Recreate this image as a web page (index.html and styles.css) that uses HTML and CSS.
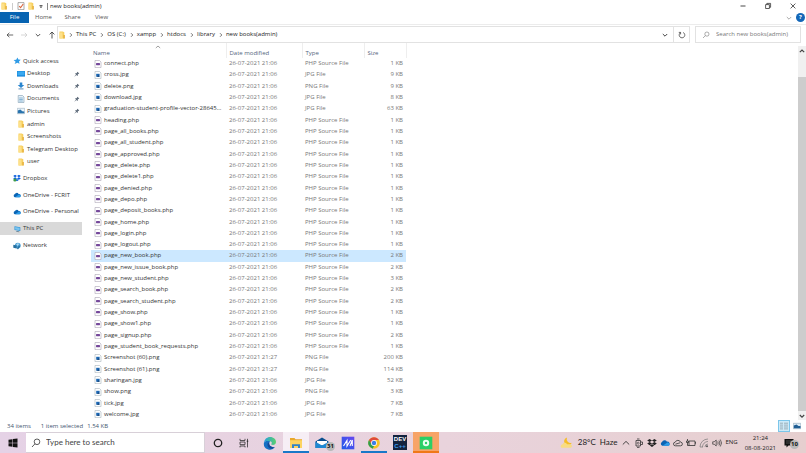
FILE: index.html
```html
<!DOCTYPE html>
<html lang="en">
<head>
<meta charset="utf-8">
<title>new books(admin)</title>
<link rel="stylesheet" href="styles.css">
</head>
<body>
<svg class="sprites" aria-hidden="true">
  <symbol id="folder" viewBox="0 0 8 8"><path fill="#f7cf5f" d="M1.5.5h3.2l1.6.8v6.2H1.5z"/><path fill="#fde08a" d="M1.5 1.5h3v6h-3z"/><path fill="#e5ad37" d="M5.4 4h1.4v3.5H5.4z"/></symbol>
  <symbol id="php" viewBox="0 0 8 8"><path fill="#fff" stroke="#a9a3b4" stroke-width=".6" d="M1 .5h4.5L7 2v5.6H1z"/><rect x="2" y="3" width="4" height="2.2" rx=".6" fill="#75489b"/></symbol>
  <symbol id="img" viewBox="0 0 8 8"><path fill="#fff" stroke="#a6b1ba" stroke-width=".6" d="M1 .5h4.5L7 2v5.6H1z"/><rect x="2.2" y="2.8" width="3.4" height="3" fill="#1c67b4"/><path fill="#123c6c" d="M3 5.8l1.4-1.5 1.2 1.5z"/></symbol>
  <symbol id="pin" viewBox="0 0 8 8"><path fill="#5f6c7b" d="M4.6 1l2.4 2.4-.6.5-.4-.1-1 1 .1 1.2-.6.6-1.4-1.4L1 7.2l-.3-.3 2-2.1-1.3-1.3.6-.6 1.2.1 1-1-.2-.4z"/></symbol>
  <symbol id="chev" viewBox="0 0 4 8"><path fill="none" stroke="#555" stroke-width=".8" d="M1 2.2L2.8 4 1 5.8"/></symbol>
  <symbol id="down" viewBox="0 0 8 8"><path fill="none" stroke="currentColor" stroke-width="1" d="M1.8 3L4 5.2 6.2 3"/></symbol>
  <symbol id="cloud" viewBox="0 0 10 8"><path fill="#0a64b4" d="M2.2 6.8A2 2 0 0 1 2 3.1 2.8 2.8 0 0 1 7 2.7a2.1 2.1 0 0 1 1 4.1z"/><path fill="#2a9be8" d="M2.8 6.8l4.4-3.3a2 2 0 0 1 2.4 1.7c0 1-.7 1.6-1.5 1.6z"/></symbol>
  <symbol id="dropbox" viewBox="0 0 10 9"><path d="M2.6.5L5 2 2.6 3.6.2 2zM7.4.5L9.8 2 7.4 3.6 5 2zM2.6 3.6L5 5.1 2.6 6.7.2 5.1zM7.4 3.6l2.4 1.5-2.4 1.6L5 5.1zM5 5.7l2.2 1.4L5 8.6 2.8 7.1z"/></symbol>
</svg>

<header class="titlebar">
  <div class="quick-tools">
    <svg class="ic8" viewBox="0 0 8 8"><use href="#folder"/></svg>
    <i class="sep"></i>
    <svg class="ic8" viewBox="0 0 8 8"><path fill="#fff" stroke="#888" stroke-width=".7" d="M1 .6h6v7H1z"/><path fill="none" stroke="#d9623b" stroke-width="1.1" d="M2.2 4.2l1.4 1.5L6.2 2"/></svg>
    <svg class="ic8" viewBox="0 0 8 8"><use href="#folder"/></svg>
    <svg class="ic8" viewBox="0 0 8 8"><path fill="#333" d="M2.5 3h3v.7h-3zM2.5 4.5h3L4 6z"/></svg>
    <i class="sep dark"></i>
  </div>
  <h1>new books(admin)</h1>
  <div class="window-buttons">
    <button aria-label="Minimize"><svg class="ic8" viewBox="0 0 8 8"><path stroke="#333" stroke-width=".9" d="M1.500 4h5"/></svg></button>
    <button aria-label="Restore"><svg class="ic8" viewBox="0 0 8 8"><path fill="none" stroke="#333" stroke-width=".8" d="M1.600 2.600h3.800v3.900H1.600zM2.800 2.600V1.400h3.800v3.900H5.400"/></svg></button>
    <button aria-label="Close"><svg class="ic8" viewBox="0 0 8 8"><path stroke="#333" stroke-width=".8" d="M1.600 1.600l4.800 4.800M6.400 1.600L1.600 6.400"/></svg></button>
  </div>
</header>

<nav class="ribbon">
  <button class="file">File</button><button>Home</button><button>Share</button><button>View</button>
  <div class="ribbon-end">
    <svg class="ic8 faint" viewBox="0 0 8 8"><use href="#down"/></svg>
    <button class="help" aria-label="Help">?</button>
  </div>
</nav>

<div class="address-row">
  <div class="history">
    <button aria-label="Back"><svg class="ic8" viewBox="0 0 8 8"><path fill="none" stroke="#444" stroke-width=".8" d="M7.200 4H1M3.400 1.800L1 4l2.400 2.200"/></svg></button>
    <button aria-label="Forward"><svg class="ic8" viewBox="0 0 8 8"><path fill="none" stroke="#ccc" stroke-width=".8" d="M1 4h6M4.800 1.800L7 4 4.800 6.200"/></svg></button>
    <button aria-label="Recent"><svg class="ic8" viewBox="0 0 8 8"><use href="#down"/></svg></button>
    <button aria-label="Up"><svg class="ic8" viewBox="0 0 8 8"><path fill="none" stroke="#444" stroke-width=".9" d="M4 7.500V1M1.600 3.400L4 1l2.400 2.400"/></svg></button>
  </div>
  <div class="address">
    <svg class="ic8" viewBox="0 0 8 8"><use href="#folder"/></svg>
    <svg class="chev"><use href="#chev"/></svg><a href="#">This PC</a>
    <svg class="chev"><use href="#chev"/></svg><a href="#">OS (C:)</a>
    <svg class="chev"><use href="#chev"/></svg><a href="#">xampp</a>
    <svg class="chev"><use href="#chev"/></svg><a href="#">htdocs</a>
    <svg class="chev"><use href="#chev"/></svg><a href="#">library</a>
    <svg class="chev"><use href="#chev"/></svg><a href="#">new books(admin)</a>
    <button class="drop" aria-label="Previous locations"><svg class="ic8" viewBox="0 0 8 8"><use href="#down"/></svg></button>
    <button class="refresh" aria-label="Refresh"><svg class="ic8" viewBox="0 0 8 8"><path fill="none" stroke="#444" stroke-width=".8" d="M5.200 1.500a2.800 2.800 0 1 1-2.600.1M2.600 3.400V1.400H.8"/></svg></button>
  </div>
  <label class="search">
    <svg class="ic8" viewBox="0 0 8 8"><circle cx="4.900" cy="3.100" r="2.100" fill="none" stroke="#777" stroke-width=".6"/><path stroke="#777" stroke-width=".6" d="M3.400 4.600L1 7"/></svg>
    <input type="text" placeholder="Search new books(admin)" aria-label="Search new books(admin)">
  </label>
</div>

<main class="panes">
  <nav class="tree">
    <ul class="quick">
      <li class="root"><svg class="ic8" viewBox="0 0 8 8"><path fill="#2f9be6" d="M4.400.6l1 2 2.300.2-1.700 1.600.5 2.300-2.100-1L1.600 7l1-2.300L.6 3l2.600-.3z"/></svg><a href="#">Quick access</a></li>
      <li><svg class="ic8" viewBox="0 0 8 8"><path fill="#1687d9" d="M0 1h8v5.600H0z"/><path fill="#39a9f0" d="M.5 1.500h7v3.800h-7z"/></svg><a href="#">Desktop</a><svg class="pin"><use href="#pin"/></svg></li>
      <li><svg class="ic8" viewBox="0 0 8 8"><path fill="#2b86cf" d="M2.700.5h2.600V3h2L4 6 .7 3h2z"/><path fill="#5a8bb5" d="M1.500 6.400h5v1h-5z"/></svg><a href="#">Downloads</a><svg class="pin"><use href="#pin"/></svg></li>
      <li><svg class="ic8" viewBox="0 0 8 8"><path fill="#e8f1f7" stroke="#7d9cb2" stroke-width=".6" d="M1.200.5h4.300L7 2v5.500H1.200z"/><path stroke="#5b9bc8" stroke-width=".7" d="M2.200 3h3.600M2.200 4.500h3.600M2.200 6h3.600"/></svg><a href="#">Documents</a><svg class="pin"><use href="#pin"/></svg></li>
      <li><svg class="ic8" viewBox="0 0 8 8"><path fill="#eaf4fb" stroke="#8ba2b3" stroke-width=".5" d="M.3 1.300h7.400v5.400H.3z"/><path fill="#2973ad" d="M.8 6.200V3.600l2.500-1 2 1.700 2 .2v1.700z"/></svg><a href="#">Pictures</a><svg class="pin"><use href="#pin"/></svg></li>
      <li><svg class="ic8"><use href="#folder"/></svg><a href="#">admin</a></li>
      <li><svg class="ic8"><use href="#folder"/></svg><a href="#">Screenshots</a></li>
      <li><svg class="ic8"><use href="#folder"/></svg><a href="#">Telegram Desktop</a></li>
      <li><svg class="ic8"><use href="#folder"/></svg><a href="#">user</a></li>
    </ul>
    <ul class="roots">
      <li><svg class="ic8" viewBox="0 0 10 9" fill="#0b5fe0"><use href="#dropbox"/><circle cx="2.400" cy="7" r="2" fill="#3f9b45"/></svg><a href="#">Dropbox</a></li>
      <li><svg class="ic8"><use href="#cloud"/></svg><a href="#">OneDrive - FCRIT</a></li>
      <li><svg class="ic8"><use href="#cloud"/></svg><a href="#">OneDrive - Personal</a></li>
      <li class="current"><svg class="ic8" viewBox="0 0 8 8"><path fill="#2b93d6" d="M1.500 1.200l5.800 1v3.900l-5.800-1z"/><path fill="#7cc4ef" d="M2.100 1.900l4.600.8v2.600l-4.600-.8z"/><path fill="#56748a" d="M3.300 6l3 .6v.7l-3-.5z"/></svg><a href="#">This PC</a></li>
      <li><svg class="ic8" viewBox="0 0 8 8"><circle cx="4.800" cy="3.600" r="2.900" fill="#4a9ed4"/><path fill="#a9d8f2" d="M3.200 2.200l2-1.200.8 1.400-1.600 1.500z"/><path fill="#27709f" d="M.3 2.800l3.300.6v3l-3.300-.7zM4 6.500l2-3 1.200.6L5 7.600z"/></svg><a href="#">Network</a></li>
    </ul>
  </nav>

  <section class="list">
    <table>
      <thead><tr><th class="name">Name<svg class="sort" viewBox="0 0 8 8"><path fill="none" stroke="#888" stroke-width=".8" d="M1.800 5L4 3l2.200 2"/></svg></th><th class="date">Date modified</th><th class="type">Type</th><th class="size">Size</th></tr></thead>
      <tbody>
        <tr><td><svg><use href="#php"/></svg>connect.php</td><td>26-07-2021 21:06</td><td>PHP Source File</td><td>1 KB</td></tr>
        <tr><td><svg><use href="#img"/></svg>cross.jpg</td><td>26-07-2021 21:06</td><td>JPG File</td><td>9 KB</td></tr>
        <tr><td><svg><use href="#img"/></svg>delete.png</td><td>26-07-2021 21:06</td><td>PNG File</td><td>9 KB</td></tr>
        <tr><td><svg><use href="#img"/></svg>download.jpg</td><td>26-07-2021 21:06</td><td>JPG File</td><td>8 KB</td></tr>
        <tr><td><svg><use href="#img"/></svg>graduation-student-profile-vector-28645...</td><td>26-07-2021 21:06</td><td>JPG File</td><td>63 KB</td></tr>
        <tr><td><svg><use href="#php"/></svg>heading.php</td><td>26-07-2021 21:06</td><td>PHP Source File</td><td>1 KB</td></tr>
        <tr><td><svg><use href="#php"/></svg>page_all_books.php</td><td>26-07-2021 21:06</td><td>PHP Source File</td><td>1 KB</td></tr>
        <tr><td><svg><use href="#php"/></svg>page_all_student.php</td><td>26-07-2021 21:06</td><td>PHP Source File</td><td>1 KB</td></tr>
        <tr><td><svg><use href="#php"/></svg>page_approved.php</td><td>26-07-2021 21:06</td><td>PHP Source File</td><td>1 KB</td></tr>
        <tr><td><svg><use href="#php"/></svg>page_delete.php</td><td>26-07-2021 21:06</td><td>PHP Source File</td><td>1 KB</td></tr>
        <tr><td><svg><use href="#php"/></svg>page_delete1.php</td><td>26-07-2021 21:06</td><td>PHP Source File</td><td>1 KB</td></tr>
        <tr><td><svg><use href="#php"/></svg>page_denied.php</td><td>26-07-2021 21:06</td><td>PHP Source File</td><td>1 KB</td></tr>
        <tr><td><svg><use href="#php"/></svg>page_depo.php</td><td>26-07-2021 21:06</td><td>PHP Source File</td><td>1 KB</td></tr>
        <tr><td><svg><use href="#php"/></svg>page_deposit_books.php</td><td>26-07-2021 21:06</td><td>PHP Source File</td><td>1 KB</td></tr>
        <tr><td><svg><use href="#php"/></svg>page_home.php</td><td>26-07-2021 21:06</td><td>PHP Source File</td><td>1 KB</td></tr>
        <tr><td><svg><use href="#php"/></svg>page_login.php</td><td>26-07-2021 21:06</td><td>PHP Source File</td><td>1 KB</td></tr>
        <tr><td><svg><use href="#php"/></svg>page_logout.php</td><td>26-07-2021 21:06</td><td>PHP Source File</td><td>1 KB</td></tr>
        <tr class="selected"><td><svg><use href="#php"/></svg>page_new_book.php</td><td>26-07-2021 21:06</td><td>PHP Source File</td><td>2 KB</td></tr>
        <tr><td><svg><use href="#php"/></svg>page_new_issue_book.php</td><td>26-07-2021 21:06</td><td>PHP Source File</td><td>2 KB</td></tr>
        <tr><td><svg><use href="#php"/></svg>page_new_student.php</td><td>26-07-2021 21:06</td><td>PHP Source File</td><td>3 KB</td></tr>
        <tr><td><svg><use href="#php"/></svg>page_search_book.php</td><td>26-07-2021 21:06</td><td>PHP Source File</td><td>2 KB</td></tr>
        <tr><td><svg><use href="#php"/></svg>page_search_student.php</td><td>26-07-2021 21:06</td><td>PHP Source File</td><td>2 KB</td></tr>
        <tr><td><svg><use href="#php"/></svg>page_show.php</td><td>26-07-2021 21:06</td><td>PHP Source File</td><td>1 KB</td></tr>
        <tr><td><svg><use href="#php"/></svg>page_show1.php</td><td>26-07-2021 21:06</td><td>PHP Source File</td><td>1 KB</td></tr>
        <tr><td><svg><use href="#php"/></svg>page_signup.php</td><td>26-07-2021 21:06</td><td>PHP Source File</td><td>2 KB</td></tr>
        <tr><td><svg><use href="#php"/></svg>page_student_book_requests.php</td><td>26-07-2021 21:06</td><td>PHP Source File</td><td>1 KB</td></tr>
        <tr><td><svg><use href="#img"/></svg>Screenshot (60).png</td><td>26-07-2021 21:27</td><td>PNG File</td><td>200 KB</td></tr>
        <tr><td><svg><use href="#img"/></svg>Screenshot (61).png</td><td>26-07-2021 21:27</td><td>PNG File</td><td>114 KB</td></tr>
        <tr><td><svg><use href="#img"/></svg>sharingan.jpg</td><td>26-07-2021 21:06</td><td>JPG File</td><td>52 KB</td></tr>
        <tr><td><svg><use href="#img"/></svg>show.png</td><td>26-07-2021 21:06</td><td>PNG File</td><td>3 KB</td></tr>
        <tr><td><svg><use href="#img"/></svg>tick.jpg</td><td>26-07-2021 21:06</td><td>JPG File</td><td>7 KB</td></tr>
        <tr><td><svg><use href="#img"/></svg>welcome.jpg</td><td>26-07-2021 21:06</td><td>JPG File</td><td>7 KB</td></tr>
      </tbody>
    </table>
  </section>

  <div class="scrollbar">
    <button aria-label="Scroll up"><svg class="ic8" viewBox="0 0 8 8"><path fill="none" stroke="#444" stroke-width="1.200" d="M1.800 5.200L4 3l2.200 2.200"/></svg></button>
    <div class="track"><div class="thumb"></div></div>
    <button aria-label="Scroll down"><svg class="ic8" viewBox="0 0 8 8"><path fill="none" stroke="#444" stroke-width="1.200" d="M1.800 3L4 5.200 6.200 3"/></svg></button>
  </div>
</main>

<footer class="status">
  <span>34 items</span><span>1 item selected</span><span class="bytes">1.54 KB</span>
  <div class="views">
    <button class="on" aria-label="Details"><svg class="ic8" viewBox="0 0 8 8"><path stroke="#86969f" stroke-width=".7" d="M0 1.200h3M4 1.200h4M0 3.100h3M4 3.100h4M0 5h3M4 5h4M0 6.900h3M4 6.900h4"/></svg></button>
    <button aria-label="Large icons"><svg class="ic8" viewBox="0 0 8 8"><path fill="#dcecf7" stroke="#7e98ab" stroke-width=".5" d="M.3 1.300h7.400v5.400H.3z"/><path fill="#215f94" d="M.8 6.200V3.400l2.700-.9 2 1.600 2-.1v2.200z"/></svg></button>
  </div>
</footer>

<div class="taskbar">
  <button class="start" aria-label="Start"><svg class="ic10" viewBox="0 0 10 10"><path fill="#111" d="M.5 1.700l3.900-.5v3.500H.5zM4.900 1.100L9.500.5v4.200H4.900zM.5 5.200h3.900v3.600l-3.900-.6zM4.900 5.200h4.600v4.300l-4.600-.6z"/></svg></button>
  <label class="task-search">
    <svg class="ic10" viewBox="0 0 10 10"><circle cx="6" cy="3.800" r="2.800" fill="none" stroke="#333" stroke-width=".8"/><path stroke="#333" stroke-width=".8" d="M4 5.800L1 9"/></svg>
    <input type="text" placeholder="Type here to search" aria-label="Type here to search">
  </label>
  <div class="apps">
    <button aria-label="Cortana"><svg class="ic10" viewBox="0 0 10 10"><circle cx="5" cy="5" r="3.700" fill="none" stroke="#222" stroke-width="1.300"/></svg></button>
    <button aria-label="Task view"><svg class="ic10" viewBox="0 0 10 10"><path fill="none" stroke="#333" stroke-width=".8" d="M1 .8v1.700h5V.8M1 4h5v2.600H1zM1 9.400V8h5v1.400M8.500.8v8.600"/><path fill="#333" d="M7.800 2.600h1.400V4H7.800z"/></svg></button>
    <button aria-label="Edge"><svg class="ic14" viewBox="0 0 14 14"><defs><linearGradient id="e1" x1="0" y1="0" x2="1" y2="0"><stop offset="0" stop-color="#249fe0"/><stop offset="1" stop-color="#5cd06a"/></linearGradient></defs><path fill="#1570c4" d="M1 6.500A6 6 0 0 0 11.900 11c-3.200 1-5.700-1-5.700-3.400L7 5 4 4z"/><path fill="url(#e1)" d="M1 6.800C1.300 3.300 3.900 1 7.100 1c3.600 0 5.900 2.400 5.900 4.900 0 2-1.500 3-3.100 3-1 0-1.800-.4-1.500-.9.9-1.300.2-2.700-1.700-2.700C4.300 4.500 1.800 4.800 1 6.800z"/><path fill="#154a96" d="M5.300 6.200C3.300 8.800 5.500 13 8.600 12.700c1.400-.2 2.600-.8 3.300-1.700-3.200 1-5.700-1-5.700-3.400z"/></svg></button>
    <button class="open active" aria-label="File Explorer"><svg class="ic14" viewBox="0 0 14 14"><path fill="#e9a82c" d="M1 2h4.500l1 1.200H13V12H1z"/><path fill="#fcd462" d="M1 4.200h12V12H1z"/><path fill="#2f83c9" d="M3 12V8.200h8V12H9V10H5v2z"/></svg></button>
    <button class="mail" aria-label="Mail"><svg class="ic14" viewBox="0 0 14 14"><path fill="#0b4f8f" d="M.5 5.500L7 1.500l6.500 4V12H.5z"/><path fill="#fff" d="M2 5h10v3L7 9.500 2 8z"/><path fill="#1e88d2" d="M.5 5.800L7 9.500l6.500-3.700V12H.5z"/></svg><span class="badge">31</span></button>
    <button aria-label="MyASUS"><svg class="ic14" viewBox="0 0 14 14"><defs><linearGradient id="m1" x1="0" y1="1" x2="1" y2="0"><stop offset="0" stop-color="#1c5bea"/><stop offset="1" stop-color="#6947ee"/></linearGradient></defs><path fill="url(#m1)" d="M.7.7h12.600v12.600H.7z"/><path fill="none" stroke="#fff" stroke-width="1.100" d="M2.500 10l3.500-5.500V10l3.800-6M9 10l2.300-6V10"/></svg></button>
    <button class="open" aria-label="Chrome"><svg class="ic14" viewBox="0 0 14 14"><circle cx="7" cy="7" r="5.800" fill="#f6c326"/><path fill="#df4a3b" d="M2 4.100A5.800 5.800 0 0 1 12 4.100H7L4.600 8.400z"/><path fill="#2d9d51" d="M2 4.100l2.500 4.300L7 9.900l-1.300 2.800A5.800 5.800 0 0 1 2 4.100z"/><circle cx="7" cy="7" r="2.900" fill="#fff"/><circle cx="7" cy="7" r="2.200" fill="#3c7ee6"/></svg></button>
    <button class="dev" aria-label="Dev-C++"><span>DEV</span><small>C++</small></button>
    <button class="recorder" aria-label="Recorder"><svg class="ic14" viewBox="0 0 14 14"><path fill="#2bcf66" d="M.7.7h12.600v12.600H.7z"/><circle cx="7" cy="7" r="3.200" fill="#e9fff0"/><circle cx="7" cy="7" r="1.200" fill="#2bcf66"/></svg></button>
  </div>
  <div class="tray">
    <button class="weather"><svg class="ic14" viewBox="0 0 14 14"><path fill="#f5bd28" d="M7 1.500a4 4 0 1 0 4.800 5.300A4 4 0 0 1 7 1.500z"/><path fill="#f9dc82" d="M1.500 11.800a2 2 0 0 1 1-3.600 2.500 2.500 0 0 1 4.500 0h3a1.800 1.800 0 0 1 .3 3.600z"/></svg><span>28°C</span><span>Haze</span></button>
    <div class="tray-icons">
      <svg class="ic10" viewBox="0 0 10 10"><path fill="none" stroke="#333" stroke-width=".9" d="M1.800 6.500L5 3.400l3.200 3.100"/></svg>
      <svg class="ic10" viewBox="0 0 10 10"><path fill="none" stroke="#333" stroke-width=".8" d="M2 2.500h4.500v5.500H2zM6.500 4h2v2.500h-2M3 1h2.500M3 9.400h2.500"/><circle cx="4.200" cy="5.200" r="1" fill="none" stroke="#333" stroke-width=".6"/></svg>
      <svg class="ic10" viewBox="0 0 10 9" fill="#222"><use href="#dropbox"/></svg>
      <svg class="ic10"><use href="#cloud"/></svg>
      <svg class="ic10" viewBox="0 0 10 10"><path fill="none" stroke="#444" stroke-width=".9" d="M2.400 7.800a1.800 1.800 0 0 1-.2-3.600 2.900 2.900 0 0 1 5.400 0 1.800 1.800 0 0 1 0 3.600zM2.400 6.200L7 4.800"/></svg>
      <svg class="ic10" viewBox="0 0 10 10"><path fill="none" stroke="#333" stroke-width=".8" d="M3 3h6v4.500H3zM9 4.500h.8V6M1.500 1v2M.5 3h2v1.500h-2zM1.500 4.500v3H3"/></svg>
      <svg class="ic10" viewBox="0 0 10 10"><path fill="none" stroke="#777" stroke-width=".7" d="M1 9a8 8 0 0 1 8-8M3.500 9A5.500 5.500 0 0 1 9 3.500M6 9a3 3 0 0 1 3-3M1 9h3"/><circle cx="8" cy="8.200" r="1" fill="#555"/></svg>
      <svg class="ic10" viewBox="0 0 10 10"><path fill="none" stroke="#333" stroke-width=".7" d="M.7 3.800h1.500l2-1.800v6l-2-1.800H.7zM5.700 3.500q1 1.500 0 3M7 2.500q1.800 2.500 0 5M8.300 1.500q2.500 3.500 0 7"/></svg>
    </div>
    <span class="lang">ENG</span>
    <time class="clock"><span>21:24</span><span>08-08-2021</span></time>
    <button class="notify" aria-label="Notifications"><svg class="ic10" viewBox="0 0 10 10"><path fill="#111" d="M.5 1h9v6.500h-5l-2 2v-2h-2z"/><path stroke="#777" stroke-width=".6" d="M2 3h6M2 5h6"/></svg><span class="badge">10</span></button>
  </div>
</div>
</body>
</html>
```
FILE: styles.css
```css
* { box-sizing: border-box; }
body {
  margin: 0;
  min-height: 100vh;
  display: flex;
  flex-direction: column;
  background: #fff;
  color: #333;
  font: 6px/9px "Open Sans", "Noto Sans", sans-serif;
}
button, input {
  font: inherit;
  color: inherit;
  background: none;
  border: 0;
  padding: 0;
  margin: 0;
}
button { display: flex; align-items: center; justify-content: center; }
a { color: inherit; text-decoration: none; white-space: nowrap; }
ul { list-style: none; margin: 0; padding: 0; }
svg { flex: none; display: block; }
.sprites { position: absolute; width: 0; height: 0; }
.ic8 { width: 8px; height: 8px; }
.ic10 { width: 10px; height: 10px; }
.ic14 { width: 14px; height: 14px; }

.titlebar { display: flex; align-items: center; height: 12px; }
.titlebar h1 { margin: 0; font-size: 6px; font-weight: 400; color: #222; }
.quick-tools { display: flex; align-items: center; gap: 2px; padding-right: 2px; }
.sep { width: 1px; height: 7px; background: #ccc; margin: 0 2px; }
.sep.dark { background: #888; margin: 0; }
.window-buttons { display: flex; margin-left: auto; padding-right: 1px; }
.window-buttons button { width: 25px; height: 12px; }

.ribbon { display: flex; height: 13px; padding-bottom: 1px; border-bottom: 1px solid #ececec; color: #555; }
.ribbon > button { width: 29px; }
.ribbon > .file { background: #0763b1; color: #fff; }
.ribbon-end { display: flex; align-items: center; gap: 3px; margin-left: auto; padding-right: 1px; }
.faint { color: #aaa; }
.help { width: 9px; height: 9px; border-radius: 50%; background: #1467b8; color: #fff; font-weight: 700; }

.address-row { display: flex; align-items: center; height: 18px; padding: 1px 5px 0 6px; gap: 5px; }
.history { display: flex; gap: 6px; width: 46px; color: #555; }
.history button { width: 8px; }
.address, .search { height: 17px; border: 1px solid #e2e2e2; display: flex; align-items: center; }
.address { flex: 1; }
.address > a { color: #222; }
.chev { width: 4px; height: 8px; margin: 0 3px; }
.address > a + .chev { margin-left: 4px; }
.drop { width: 16px; height: 15px; margin-left: auto; color: #444; }
.refresh { width: 16px; height: 15px; border-left: 1px solid #e2e2e2; }
.search { width: 106px; padding-left: 6px; gap: 6px; }
input { flex: 1; min-width: 0; outline: 0; }
.search input::placeholder { color: #777; opacity: 1; }

.panes { flex: 1; display: flex; min-height: 0; }
.tree { width: 82px; padding-top: 12px; margin-right: 9px; }
.quick { display: grid; grid-auto-rows: 1fr; height: 113px; margin-bottom: 2px; }
.roots { display: grid; grid-auto-rows: 1fr; height: 84px; }
.tree li { display: flex; align-items: center; gap: 2px; padding-left: 17px; }
.tree .root, .tree .roots li { padding-left: 13px; }
.tree .roots .current { background: #d9d9d9; margin: 2px 0; }
.pin { width: 6px; height: 6px; margin: 0 2px 0 auto; }

.list { flex: 1; display: flex; }
table { table-layout: fixed; width: 315px; border-collapse: collapse; }
th, td { padding: 0 3px; text-align: left; font-weight: 400; white-space: nowrap; }
th { height: 15px; padding-top: 5px; color: #54657d; position: relative; border-right: 1px solid #eee; }
.name { width: 135px; padding-left: 2px; }
.date { width: 76px; }
.type { width: 62px; }
.size { width: 42px; }
.sort { position: absolute; left: 63px; top: 0; width: 8px; height: 8px; }
td { color: #777; }
td:first-child { color: #333; }
td:last-child { text-align: right; }
td svg { display: inline-block; width: 8px; height: 8px; margin-right: 2px; vertical-align: middle; }
.selected { background: #cce8ff; }

.scrollbar { width: 8px; margin: 3px 0 0; display: flex; flex-direction: column; background: #f0f0f0; }
.scrollbar button { width: 8px; height: 9px; }
.track { flex: 1; padding-top: 22px; display: flex; }
.thumb { flex: 1; background: #cdcdcd; }

.status { display: flex; align-items: center; height: 12px; padding: 0 3px 0 7px; color: #43566f; }
.status span { margin-right: 10px; }
.status span + span { margin-right: 4px; }
.views { display: flex; gap: 1px; margin-left: auto; }
.views button { width: 12px; height: 12px; }
.views .on { background: #cdeaf8; border: 1px solid #7cc6ea; }

.taskbar { display: flex; height: 21px; background: linear-gradient(90deg, #e5d2e6, #e9d3dc 55%, #e6cfcf); color: #222; }
.start { width: 26px; }
.task-search { display: flex; align-items: center; gap: 5px; width: 179px; padding-left: 5px; background: #fff; border: 1px solid #d8d0d8; border-left: 0; }
.task-search input, .weather { font-family: Lato, "Open Sans", sans-serif; font-size: 8px; }
.task-search input::placeholder { color: #444; opacity: 1; }
.apps { display: flex; }
.apps button { width: 26px; position: relative; }
.apps .open { border-bottom: 2px solid #1a78c8; padding-top: 2px; }
.apps .active { background: #f6eef5; }
.badge { position: absolute; right: 0; bottom: 2px; width: 9px; height: 9px; border-radius: 50%; background: #b9b9b9; color: #111; font-size: 6px; font-weight: 700; line-height: 9px; text-align: center; }
.apps .dev { flex-direction: column; color: #fff; font-family: "Liberation Sans", sans-serif; font-weight: 700; line-height: 7px; background: linear-gradient(#14233f, #14233f) center / 14px 15px no-repeat; }
.dev small { font-size: 6px; color: #3f9cf0; }
.apps .recorder { background: #f7a467; border-bottom: 2px solid #f07818; padding-top: 2px; }
.tray { display: flex; align-items: center; margin-left: auto; padding-right: 7px; }
.weather { gap: 4px; margin-right: 4px; }
.tray-icons { display: flex; gap: 3px; margin-right: 3px; }
.lang { margin-right: 7px; }
.clock { display: flex; flex-direction: column; text-align: center; line-height: 10px; margin-right: 8px; }
.notify { position: relative; width: 15px; height: 16px; justify-content: flex-start; }
```
